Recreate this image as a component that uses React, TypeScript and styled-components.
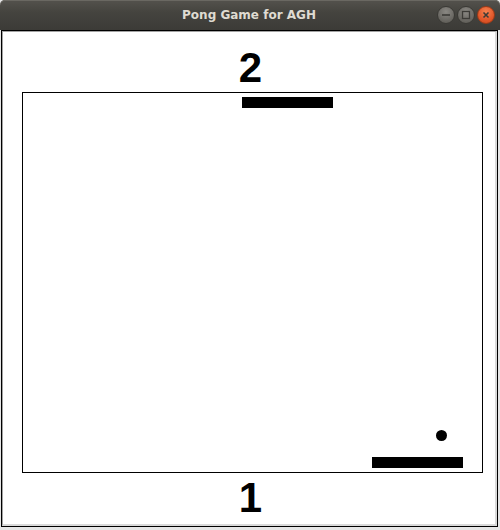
import React from "react";
import styled, { createGlobalStyle } from "styled-components";

const GlobalStyle = createGlobalStyle`
  html, body {
    margin: 0;
    padding: 0;
    background: #e6e6e6;
  }
`;

const Window = styled.div`
  width: 500px;
  height: 530px;
  display: flex;
  flex-direction: column;
  background: #e6e6e6;
`;

const TitleBar = styled.div`
  position: relative;
  height: 30px;
  flex: none;
  display: flex;
  align-items: center;
  justify-content: center;
  border-radius: 5px 5px 0 0;
  background: linear-gradient(to bottom, #54524d 0%, #45443f 40%, #3c3b37 100%);
  box-shadow: inset 0 1px 0 #6a6862;
`;

const Title = styled.span`
  font-family: "DejaVu Sans", "Noto Sans", sans-serif;
  font-weight: bold;
  font-size: 12px;
  color: #dfdbd2;
  margin-left: -2px;
`;

const Controls = styled.div`
  position: absolute;
  right: 5px;
  top: 6px;
  display: flex;
  gap: 2px;
`;

const CtrlButton = styled.div<{ $close?: boolean }>`
  width: 18px;
  height: 18px;
  border-radius: 50%;
  box-sizing: border-box;
  display: flex;
  align-items: center;
  justify-content: center;
  border: 1px solid ${(p) => (p.$close ? "#9c3a17" : "#3a3935")};
  background: ${(p) =>
    p.$close
      ? "radial-gradient(circle at 50% 30%, #f5824f 0%, #e2572a 60%, #c9461c 100%)"
      : "radial-gradient(circle at 50% 30%, #8a8883 0%, #6b6964 60%, #58574f 100%)"};
`;

const Frame = styled.div`
  margin-left: 1px;
  width: 497px;
  height: 497px;
  box-sizing: border-box;
  border: 1px solid #000;
  flex: none;
`;

const Bevel = styled.div`
  height: 100%;
  box-sizing: border-box;
  border-style: solid;
  border-width: 1px 2px 2px 1px;
  border-color: #a3a3a3 #dadada #dadada #a3a3a3;
  background: #fff;
  display: flex;
  flex-direction: column;
`;

const Score = styled.div<{ $top?: boolean }>`
  font-family: "Liberation Sans", Arial, sans-serif;
  font-weight: bold;
  font-size: 42px;
  line-height: 42px;
  height: 42px;
  color: #000;
  width: 461px;
  margin-left: 17px;
  text-align: center;
  margin-top: ${(p) => (p.$top ? "15px" : "4px")};
  margin-bottom: ${(p) => (p.$top ? "3px" : "0")};
`;

const Field = styled.div`
  position: relative;
  margin-left: 19px;
  width: 461px;
  height: 381px;
  box-sizing: border-box;
  border: 1px solid #000;
  flex: none;
`;

const Paddle = styled.div`
  position: absolute;
  width: 91px;
  height: 11px;
  background: #000;
`;

const Ball = styled.div`
  position: absolute;
  width: 11px;
  height: 11px;
  border-radius: 50%;
  background: #000;
`;

const game = {
  top: { x: 219, y: 4 },
  bottom: { x: 349, y: 364 },
  ball: { x: 413, y: 337 },
  scores: { top: 2, bottom: 1 },
};

export default function App() {
  return (
    <>
      <GlobalStyle />
      <Window>
        <TitleBar>
          <Title>Pong Game for AGH</Title>
          <Controls>
            <CtrlButton>
              <svg width="10" height="10" viewBox="0 0 10 10">
                <rect x="1" y="4.2" width="8" height="1.6" fill="#3c3b37" />
              </svg>
            </CtrlButton>
            <CtrlButton>
              <svg width="10" height="10" viewBox="0 0 10 10">
                <rect x="1.5" y="1.5" width="7" height="7" fill="none" stroke="#3c3b37" strokeWidth="1.3" />
              </svg>
            </CtrlButton>
            <CtrlButton $close>
              <svg width="10" height="10" viewBox="0 0 10 10">
                <path d="M2.5 2.5 L7.5 7.5 M7.5 2.5 L2.5 7.5" stroke="#3c3b37" strokeWidth="1.6" />
              </svg>
            </CtrlButton>
          </Controls>
        </TitleBar>
        <Frame>
          <Bevel>
            <Score $top>{game.scores.top}</Score>
            <Field>
              <Paddle style={{ left: game.top.x, top: game.top.y }} />
              <Ball style={{ left: game.ball.x, top: game.ball.y }} />
              <Paddle style={{ left: game.bottom.x, top: game.bottom.y }} />
            </Field>
            <Score>{game.scores.bottom}</Score>
          </Bevel>
        </Frame>
      </Window>
    </>
  );
}
